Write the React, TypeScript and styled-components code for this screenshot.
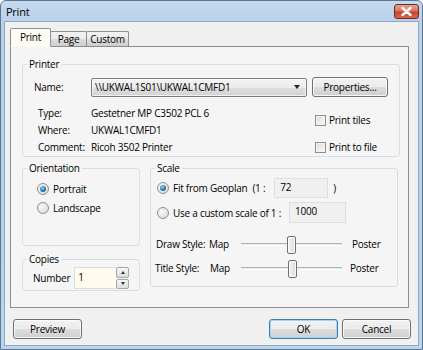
import styled, { createGlobalStyle } from "styled-components";

const Global = createGlobalStyle`
  html, body { margin: 0; padding: 0; background: #ffffff; }
  body {
    font-family: "Open Sans", "Noto Sans", sans-serif;
    font-size: 10px;
    letter-spacing: -0.25px;
    color: #000;
  }
  * { box-sizing: border-box; }
`;

const Window = styled.div`
  width: 423px;
  height: 350px;
  border: 1px solid #5b7796;
  border-radius: 6px 6px 0 0;
  background: linear-gradient(#c6daf0, #b9d0ea 22px, #bcd3ec);
  padding: 0 3px 3px 3px;
  display: flex;
  flex-direction: column;
  overflow: hidden;
`;

const TitleBar = styled.div`
  height: 20px;
  display: flex;
  align-items: center;
  justify-content: space-between;
  padding: 0 0 0 2px;
  font-size: 11px;
`;

const CloseBtn = styled.div`
  width: 25px;
  height: 15px;
  margin-top: 1px;
  border: 1px solid #6d2b26;
  border-radius: 3px;
  background: linear-gradient(#e8a493, #d9745e 45%, #c4442b 55%, #d66b4f);
  display: flex;
  align-items: center;
  justify-content: center;
`;

const Body = styled.div`
  flex: 1;
  background: #f0f0f0;
  border: 1px solid #8ea9c6;
  display: flex;
  flex-direction: column;
  padding: 5px 9px 0 5px;
`;

const TabStrip = styled.div`
  display: flex;
  align-items: flex-end;
  height: 19px;
  position: relative;
  z-index: 1;
`;

const Tab = styled.div<{ $active?: boolean; $w: number }>`
  width: ${(p) => p.$w}px;
  height: ${(p) => (p.$active ? "19px" : "15px")};
  padding-top: ${(p) => (p.$active ? "1px" : "0")};
  text-align: center;
  border: 1px solid #8e8f8f;
  border-bottom: ${(p) => (p.$active ? "1px solid #fcfbf4" : "none")};
  border-radius: 2px 2px 0 0;
  background: ${(p) =>
    p.$active ? "#fdfcf5" : "linear-gradient(#f2f2f2, #ebebeb 50%, #dddddd 50%, #cfcfcf)"};
  margin-left: ${(p) => (p.$active ? "0" : "-1px")};
  margin-bottom: ${(p) => (p.$active ? "-1px" : "0")};
  line-height: 15px;
`;

const Panel = styled.div`
  height: 262px;
  border: 1px solid #898c95;
  background: #f5f5f5;
  padding: 11px 8px 0 11px;
  display: flex;
  flex-direction: column;
`;

const Group = styled.fieldset<{ $w?: number; $h: number }>`
  margin: 0;
  padding: 0;
  border: 1px solid #d5dfe5;
  border-radius: 3px;
  min-width: 0;
  ${(p) => (p.$w ? `width: ${p.$w}px;` : "")}
  height: ${(p) => p.$h}px;
  display: flex;
  flex-direction: column;
`;

const Legend = styled.legend`
  margin-left: 4px;
  padding: 0 2px;
  line-height: 12px;
`;

const NameRow = styled.div`
  display: flex;
  align-items: center;
  padding: 7px 0 0 11px;
`;

const Label = styled.span<{ $w: number }>`
  width: ${(p) => p.$w}px;
  flex-shrink: 0;
  white-space: nowrap;
`;

const Combo = styled.div`
  width: 216px;
  height: 19px;
  border: 1px solid #7c7c7c;
  border-radius: 2px;
  background: linear-gradient(#f3f3f3, #ececec 50%, #dfdfdf 50%, #d2d2d2);
  display: flex;
  align-items: center;
  padding: 0 6px 0 3px;
  justify-content: space-between;
  box-shadow: inset 0 0 0 1px rgba(255, 255, 255, 0.7);
`;

const Arrow = styled.span`
  width: 0;
  height: 0;
  border-left: 3px solid transparent;
  border-right: 3px solid transparent;
  border-top: 4px solid #222;
`;

const Button = styled.div<{ $w: number; $default?: boolean }>`
  width: ${(p) => p.$w}px;
  height: 20px;
  border: 1px solid ${(p) => (p.$default ? "#3c7fb1" : "#707070")};
  border-radius: 3px;
  background: linear-gradient(#f2f2f2, #ebebeb 50%, #dddddd 50%, #cfcfcf);
  box-shadow: inset 0 0 0 1px ${(p) => (p.$default ? "#9ed8f5" : "rgba(255,255,255,0.8)")};
  display: flex;
  align-items: center;
  justify-content: center;
  flex-shrink: 0;
`;

const InfoArea = styled.div`
  display: flex;
  justify-content: space-between;
  padding: 8px 0 0 15px;
`;

const InfoGrid = styled.div`
  display: grid;
  grid-template-columns: 53px auto;
  line-height: 17px;
`;

const Checks = styled.div`
  display: flex;
  flex-direction: column;
  justify-content: flex-end;
  gap: 13px;
  width: 84px;
  padding-bottom: 2px;
`;

const CheckRow = styled.label`
  display: flex;
  align-items: center;
  gap: 3px;
  white-space: nowrap;
`;

const CheckBox = styled.span`
  width: 11px;
  height: 11px;
  border: 1px solid #8f8f8f;
  background: linear-gradient(135deg, #dcdcdc, #fbfbfb);
  box-shadow: inset 0 0 0 1px #f4f4f4;
`;

const Lower = styled.div`
  display: flex;
  gap: 10px;
  margin-top: 5px;
`;

const LeftCol = styled.div`
  display: flex;
  flex-direction: column;
  gap: 7px;
`;

const RadioRow = styled.label<{ $mt?: number; $pl?: number }>`
  display: flex;
  align-items: center;
  gap: 4px;
  margin-top: ${(p) => p.$mt ?? 0}px;
  padding-left: ${(p) => p.$pl ?? 0}px;
  white-space: nowrap;
  height: 14px;
`;

const Radio = styled.span<{ $on?: boolean }>`
  width: 12px;
  height: 12px;
  border-radius: 50%;
  border: 1px solid #8e8f8f;
  background: radial-gradient(circle at 35% 35%, #fafafa, #d6d6d6);
  display: flex;
  align-items: center;
  justify-content: center;
  flex-shrink: 0;
  &::after {
    content: "";
    display: ${(p) => (p.$on ? "block" : "none")};
    width: 6px;
    height: 6px;
    border-radius: 50%;
    background: radial-gradient(circle at 40% 35%, #8fd3f7, #1d5f93 70%);
  }
`;

const CopiesRow = styled.div`
  display: flex;
  align-items: center;
  padding: 2px 0 0 10px;
`;

const NumInput = styled.div`
  width: 42px;
  height: 22px;
  border: 1px solid #d8dde2;
  border-right: none;
  background: #fffbee;
  padding: 2px 0 0 3px;
  margin-left: 4px;
`;

const Spinner = styled.div`
  display: flex;
  flex-direction: column;
  width: 13px;
  height: 22px;
  gap: 1px;
`;

const SpinBtn = styled.div<{ $up?: boolean }>`
  flex: 1;
  border: 1px solid #a7a7a7;
  border-radius: 2px;
  background: linear-gradient(#f6f6f6, #dedede);
  display: flex;
  align-items: center;
  justify-content: center;
  &::after {
    content: "";
    border-left: 2px solid transparent;
    border-right: 2px solid transparent;
    ${(p) => (p.$up ? "border-bottom: 3px solid #334;" : "border-top: 3px solid #334;")}
  }
`;

const ScaleRow = styled.div<{ $mt?: number }>`
  display: flex;
  align-items: center;
  padding-left: 6px;
  margin-top: ${(p) => p.$mt ?? 0}px;
`;

const Paren = styled.span<{ $ml: number }>`
  margin-left: ${(p) => p.$ml}px;
`;

const ReadBox = styled.div<{ $w: number; $h: number; $ml?: number; $mr?: number }>`
  width: ${(p) => p.$w}px;
  height: ${(p) => p.$h}px;
  margin-left: ${(p) => (p.$ml === undefined ? "auto" : `${p.$ml}px`)};
  margin-right: ${(p) => p.$mr ?? 0}px;
  border: 1px solid #dcdfe3;
  background: #f0f0f0;
  padding: 1px 0 0 5px;
`;

const SliderRow = styled.div<{ $mt?: number; $pl?: number }>`
  display: flex;
  align-items: center;
  padding-left: ${(p) => p.$pl ?? 5}px;
  margin-top: ${(p) => p.$mt ?? 0}px;
  height: 18px;
`;

const Track = styled.div`
  width: 101px;
  height: 3px;
  margin: 0 10px 0 0;
  border-top: 1px solid #b2b2b2;
  border-bottom: 1px solid #fefefe;
  background: #e7e7e7;
  position: relative;
`;

const Thumb = styled.div<{ $x: number }>`
  position: absolute;
  left: ${(p) => p.$x}px;
  top: -8px;
  width: 9px;
  height: 18px;
  border: 1px solid #707070;
  border-radius: 2px;
  background: linear-gradient(90deg, #f4f4f4, #dcdcdc);
  box-shadow: inset 0 0 0 1px #fafafa;
`;

const Poster = styled.span<{ $ml?: number }>`
  margin-left: ${(p) => p.$ml ?? 0}px;
`;

const Footer = styled.div`
  display: flex;
  align-items: center;
  padding: 11px 0 0 3px;
  margin-right: -2px;
  gap: 4px;
`;

const Spacer = styled.div`
  flex: 1;
`;

export default function App() {
  return (
    <>
      <Global />
      <Window>
        <TitleBar>
          <span>Print</span>
          <CloseBtn>
            <svg width="11" height="9" viewBox="0 0 11 9">
              <path d="M1.5 1 L9.5 8 M9.5 1 L1.5 8" stroke="#ffffff" strokeWidth="2.4" strokeLinecap="round" />
            </svg>
          </CloseBtn>
        </TitleBar>
        <Body>
          <TabStrip>
            <Tab $active $w={41}>Print</Tab>
            <Tab $w={37}>Page</Tab>
            <Tab $w={43}>Custom</Tab>
          </TabStrip>
          <Panel>
            <Group $h={99}>
              <Legend>Printer</Legend>
              <NameRow>
                <Label $w={57}>Name:</Label>
                <Combo>
                  <span>\\UKWAL1S01\UKWAL1CMFD1</span>
                  <Arrow />
                </Combo>
                <Spacer />
                <Button $w={76} style={{ marginRight: 11 }}>Properties...</Button>
              </NameRow>
              <InfoArea>
                <InfoGrid>
                  <span>Type:</span>
                  <span>Gestetner MP C3502 PCL 6</span>
                  <span>Where:</span>
                  <span>UKWAL1CMFD1</span>
                  <span>Comment:</span>
                  <span>Ricoh 3502 Printer</span>
                </InfoGrid>
                <Checks>
                  <CheckRow>
                    <CheckBox />
                    Print tiles
                  </CheckRow>
                  <CheckRow>
                    <CheckBox />
                    Print to file
                  </CheckRow>
                </Checks>
              </InfoArea>
            </Group>
            <Lower>
              <LeftCol>
                <Group $w={118} $h={84}>
                  <Legend>Orientation</Legend>
                  <RadioRow $mt={8} $pl={14}>
                    <Radio $on />
                    Portrait
                  </RadioRow>
                  <RadioRow $mt={5} $pl={14}>
                    <Radio />
                    Landscape
                  </RadioRow>
                </Group>
                <Group $w={118} $h={38}>
                  <Legend>Copies</Legend>
                  <CopiesRow>
                    <span>Number</span>
                    <NumInput>1</NumInput>
                    <Spinner>
                      <SpinBtn $up />
                      <SpinBtn />
                    </Spinner>
                  </CopiesRow>
                </Group>
              </LeftCol>
              <Group $w={248} $h={125}>
                <Legend>Scale</Legend>
                <ScaleRow $mt={4}>
                  <RadioRow>
                    <Radio $on />
                    Fit from Geoplan
                  </RadioRow>
                  <Paren $ml={5}>(1 :</Paren>
                  <ReadBox $w={54} $h={20} $ml={9}>72</ReadBox>
                  <Paren $ml={5}>)</Paren>
                </ScaleRow>
                <ScaleRow $mt={4}>
                  <RadioRow>
                    <Radio />
                    Use a custom scale of 1 :
                  </RadioRow>
                  <ReadBox $w={57} $h={21} $mr={51}>1000</ReadBox>
                </ScaleRow>
                <SliderRow $mt={12}>
                  <Label $w={53}>Draw Style:</Label>
                  <Label $w={32}>Map</Label>
                  <Track>
                    <Thumb $x={46} />
                  </Track>
                  <Poster>Poster</Poster>
                </SliderRow>
                <SliderRow $mt={6} $pl={4}>
                  <Label $w={55}>Title Style:</Label>
                  <Label $w={31}>Map</Label>
                  <Track>
                    <Thumb $x={47} />
                  </Track>
                  <Poster $ml={-2}>Poster</Poster>
                </SliderRow>
              </Group>
            </Lower>
          </Panel>
          <Footer>
            <Button $w={69}>Preview</Button>
            <Spacer />
            <Button $w={69} $default>OK</Button>
            <Button $w={69}>Cancel</Button>
          </Footer>
        </Body>
      </Window>
    </>
  );
}
